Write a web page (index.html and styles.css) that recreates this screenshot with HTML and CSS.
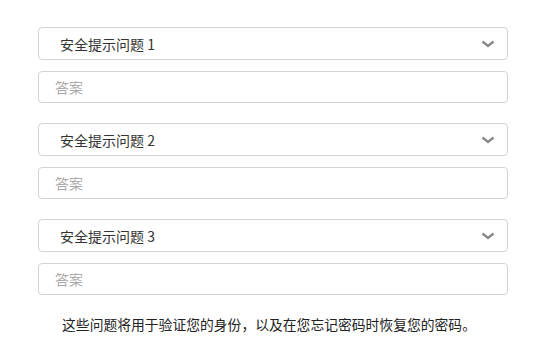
FILE: index.html
```html
<!DOCTYPE html>
<html lang="zh-CN">
<head>
<meta charset="utf-8">
<link rel="stylesheet" href="styles.css">
</head>
<body>
<div class="form">
  <div class="group">
    <div class="select"><span>安全提示问题 1</span><svg class="chev" width="14" height="8" viewBox="0 0 14 8"><path d="M1.5 1.5 L7 6 L12.5 1.5" fill="none" stroke="#8a8a8a" stroke-width="2.4"/></svg></div>
    <div class="input">答案</div>
  </div>
  <div class="group">
    <div class="select"><span>安全提示问题 2</span><svg class="chev" width="14" height="8" viewBox="0 0 14 8"><path d="M1.5 1.5 L7 6 L12.5 1.5" fill="none" stroke="#8a8a8a" stroke-width="2.4"/></svg></div>
    <div class="input">答案</div>
  </div>
  <div class="group">
    <div class="select"><span>安全提示问题 3</span><svg class="chev" width="14" height="8" viewBox="0 0 14 8"><path d="M1.5 1.5 L7 6 L12.5 1.5" fill="none" stroke="#8a8a8a" stroke-width="2.4"/></svg></div>
    <div class="input">答案</div>
  </div>
  <p class="note">这些问题将用于验证您的身份，以及在您忘记密码时恢复您的密码。</p>
</div>
</body>
</html>
```
FILE: styles.css
```css
html, body {
  margin: 0;
  padding: 0;
  background: #fff;
}
body {
  font-family: "Noto Sans CJK SC", "Noto Sans", sans-serif;
  font-size: 14px;
  color: #333;
}
.form {
  width: 470px;
  margin: 27px 0 0 38px;
  display: flex;
  flex-direction: column;
  gap: 20px;
}
.group {
  display: flex;
  flex-direction: column;
  gap: 11px;
}
.select {
  box-sizing: border-box;
  height: 33px;
  border: 1px solid #d4d4d4;
  border-radius: 4px;
  display: flex;
  align-items: center;
  justify-content: space-between;
  padding: 0 12px 0 21px;
  color: #333;
}
.input {
  box-sizing: border-box;
  height: 32px;
  border: 1px solid #d4d4d4;
  border-radius: 4px;
  display: flex;
  align-items: center;
  padding: 0 16px;
  color: #aaa;
}
.note {
  margin: -1px 0 0;
  text-align: center;
  color: #222;
  font-size: 13.8px;
  padding-right: 8px;
}
```
